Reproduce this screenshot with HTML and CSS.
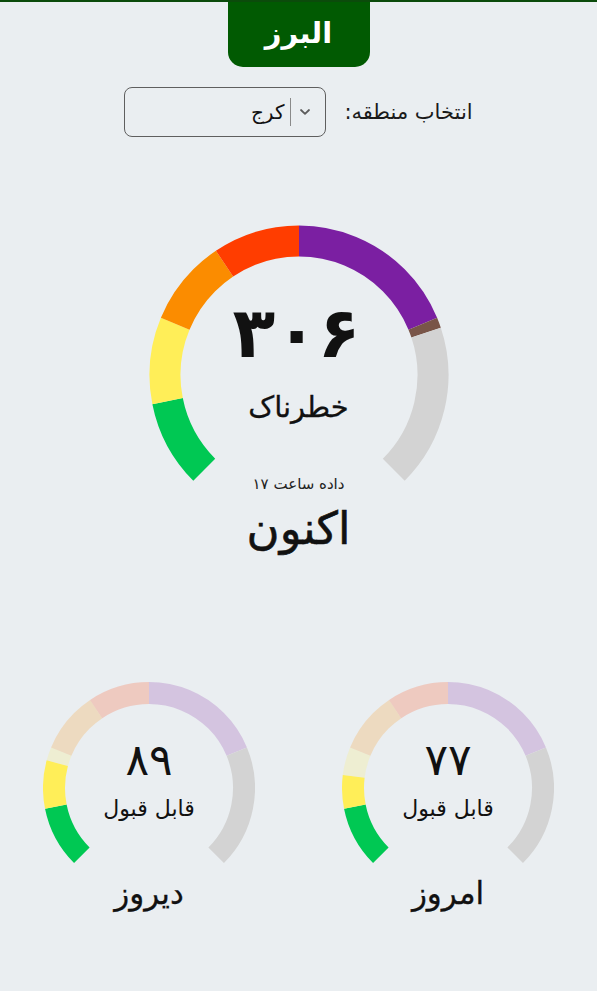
FILE: index.html
```html
<!DOCTYPE html>
<html lang="fa" dir="rtl">
<head>
<meta charset="utf-8">
<title>کیفیت هوا - البرز</title>
<link rel="stylesheet" href="styles.css">
</head>
<body>
<div class="page">
  <header class="topbar">
    <div class="tab">البرز</div>
  </header>

  <div class="region-row">
    <span class="region-label">انتخاب منطقه:</span>
    <div class="select">
      <span class="select-arrow">
        <svg width="12" height="8" viewBox="0 0 12 8"><path d="M2 2 L6 5.8 L10 2" fill="none" stroke="#5c5c5c" stroke-width="1.8" stroke-linecap="round" stroke-linejoin="round"/></svg>
      </span>
      <span class="select-sep"></span>
      <span class="select-value">کرج</span>
    </div>
  </div>

  <section class="main-gauge">
    <div class="gauge-stack main-stack">
      <svg class="gauge-svg main-svg" width="300" height="262" viewBox="0 0 300 262">
        <g transform="rotate(135 150 150)" fill="none" stroke-width="31">
          <circle cx="150" cy="150" r="134" pathLength="360" stroke="#00c853" stroke-dasharray="33.75 360" stroke-dashoffset="0"/>
          <circle cx="150" cy="150" r="134" pathLength="360" stroke="#ffee58" stroke-dasharray="33.75 360" stroke-dashoffset="-33.75"/>
          <circle cx="150" cy="150" r="134" pathLength="360" stroke="#fb8c00" stroke-dasharray="33.75 360" stroke-dashoffset="-67.5"/>
          <circle cx="150" cy="150" r="134" pathLength="360" stroke="#ff3d00" stroke-dasharray="33.75 360" stroke-dashoffset="-101.25"/>
          <circle cx="150" cy="150" r="134" pathLength="360" stroke="#7b1fa2" stroke-dasharray="67.5 360" stroke-dashoffset="-135"/>
          <circle cx="150" cy="150" r="134" pathLength="360" stroke="#795548" stroke-dasharray="4.05 360" stroke-dashoffset="-202.5"/>
          <circle cx="150" cy="150" r="134" pathLength="360" stroke="#d3d3d3" stroke-dasharray="63.45 360" stroke-dashoffset="-206.55"/>
        </g>
      </svg>
      <div class="gauge-text main-text">
        <div class="main-value">۳۰۶</div>
        <div class="main-status">خطرناک</div>
        <div class="main-time">داده ساعت ۱۷</div>
      </div>
    </div>
    <div class="main-label">اکنون</div>
  </section>

  <section class="small-row">
    <div class="small-gauge">
      <div class="gauge-stack small-stack">
        <svg class="gauge-svg" width="212" height="186" viewBox="0 0 212 186">
          <g transform="rotate(135 106 106)" fill="none" stroke-width="22">
            <circle cx="106" cy="106" r="95" pathLength="360" stroke="#00c853" stroke-dasharray="33.75 360" stroke-dashoffset="0"/>
            <circle cx="106" cy="106" r="95" pathLength="360" stroke="#ffee58" stroke-dasharray="18.225 360" stroke-dashoffset="-33.75"/>
            <circle class="faded" cx="106" cy="106" r="95" pathLength="360" stroke="#ffee58" stroke-dasharray="15.525 360" stroke-dashoffset="-51.975"/>
            <circle class="faded" cx="106" cy="106" r="95" pathLength="360" stroke="#fb8c00" stroke-dasharray="33.75 360" stroke-dashoffset="-67.5"/>
            <circle class="faded" cx="106" cy="106" r="95" pathLength="360" stroke="#ff3d00" stroke-dasharray="33.75 360" stroke-dashoffset="-101.25"/>
            <circle class="faded" cx="106" cy="106" r="95" pathLength="360" stroke="#7b1fa2" stroke-dasharray="67.5 360" stroke-dashoffset="-135"/>
            <circle cx="106" cy="106" r="95" pathLength="360" stroke="#d3d3d3" stroke-dasharray="67.5 360" stroke-dashoffset="-202.5"/>
          </g>
        </svg>
        <div class="gauge-text small-text">
          <div class="small-value">۷۷</div>
          <div class="small-status">قابل قبول</div>
        </div>
      </div>
      <div class="small-label">امروز</div>
    </div>

    <div class="small-gauge">
      <div class="gauge-stack small-stack">
        <svg class="gauge-svg" width="212" height="186" viewBox="0 0 212 186">
          <g transform="rotate(135 106 106)" fill="none" stroke-width="22">
            <circle cx="106" cy="106" r="95" pathLength="360" stroke="#00c853" stroke-dasharray="33.75 360" stroke-dashoffset="0"/>
            <circle cx="106" cy="106" r="95" pathLength="360" stroke="#ffee58" stroke-dasharray="26.325 360" stroke-dashoffset="-33.75"/>
            <circle class="faded" cx="106" cy="106" r="95" pathLength="360" stroke="#ffee58" stroke-dasharray="7.425 360" stroke-dashoffset="-60.075"/>
            <circle class="faded" cx="106" cy="106" r="95" pathLength="360" stroke="#fb8c00" stroke-dasharray="33.75 360" stroke-dashoffset="-67.5"/>
            <circle class="faded" cx="106" cy="106" r="95" pathLength="360" stroke="#ff3d00" stroke-dasharray="33.75 360" stroke-dashoffset="-101.25"/>
            <circle class="faded" cx="106" cy="106" r="95" pathLength="360" stroke="#7b1fa2" stroke-dasharray="67.5 360" stroke-dashoffset="-135"/>
            <circle cx="106" cy="106" r="95" pathLength="360" stroke="#d3d3d3" stroke-dasharray="67.5 360" stroke-dashoffset="-202.5"/>
          </g>
        </svg>
        <div class="gauge-text small-text">
          <div class="small-value">۸۹</div>
          <div class="small-status">قابل قبول</div>
        </div>
      </div>
      <div class="small-label">دیروز</div>
    </div>
  </section>
</div>
</body>
</html>
```

FILE: styles.css
```css
html, body {
  margin: 0;
  padding: 0;
}

body {
  background: #eaeef1;
  font-family: "DejaVu Sans", "Noto Sans", sans-serif;
  color: #111;
  direction: rtl;
}

.page {
  width: 597px;
  min-height: 991px;
  box-sizing: border-box;
}

.topbar {
  border-top: 2px solid #0b4b0b;
  display: flex;
  justify-content: center;
}

.tab {
  width: 142px;
  height: 65px;
  background: #015a02;
  border-radius: 0 0 15px 15px;
  color: #fff;
  font-weight: bold;
  font-size: 29px;
  display: flex;
  align-items: center;
  justify-content: center;
  box-sizing: border-box;
  padding-bottom: 4px;
}

.region-row {
  margin-top: 20px;
  display: flex;
  justify-content: center;
  align-items: center;
  gap: 18px;
}

.region-label {
  font-size: 21px;
  color: #1a1a1a;
}

.select {
  width: 202px;
  height: 50px;
  box-sizing: border-box;
  border: 1.5px solid #5f5f5f;
  border-radius: 8px;
  display: flex;
  align-items: center;
  padding-right: 13px;
}

.select-arrow {
  display: flex;
  align-items: center;
  width: 14px;
  justify-content: center;
}

.select-sep {
  width: 1px;
  height: 28px;
  background: #8a8a8a;
  margin: 0 7px 0 6px;
}

.select-value {
  flex: 1;
  font-size: 20px;
  color: #111;
  text-align: right;
}

.main-gauge {
  margin-top: 88px;
  display: flex;
  flex-direction: column;
  align-items: center;
}

.gauge-stack {
  display: grid;
}

.gauge-stack > * {
  grid-area: 1 / 1;
}

.gauge-svg {
  display: block;
}

.faded {
  opacity: 0.2;
}

.gauge-text {
  display: flex;
  flex-direction: column;
  align-items: center;
}

.main-text {
  padding-top: 70px;
}

.main-value {
  font-size: 70px;
  font-weight: bold;
  line-height: 76px;
  letter-spacing: 14px;
  padding-right: 4px;
  direction: ltr;
}

.main-status {
  margin-top: 16px;
  font-size: 29px;
  line-height: 40px;
  -webkit-text-stroke: 0.3px #111;
}

.main-time {
  margin-top: 47px;
  font-size: 15px;
  line-height: 20px;
  color: #222;
}

.main-label {
  margin-top: 10px;
  font-size: 45px;
  line-height: 50px;
  -webkit-text-stroke: 0.6px #111;
}

.small-row {
  margin-top: 128px;
  display: flex;
  justify-content: space-between;
  padding: 0 43px;
}

.small-gauge {
  display: flex;
  flex-direction: column;
  align-items: center;
}

.small-text {
  padding-top: 53px;
}

.small-value {
  font-size: 44px;
  line-height: 50px;
  letter-spacing: 11px;
  direction: ltr;
}

.small-status {
  margin-top: 10px;
  font-size: 22px;
  line-height: 28px;
}

.small-label {
  margin-top: 5px;
  font-size: 31px;
  line-height: 40px;
  -webkit-text-stroke: 0.3px #111;
}
```
